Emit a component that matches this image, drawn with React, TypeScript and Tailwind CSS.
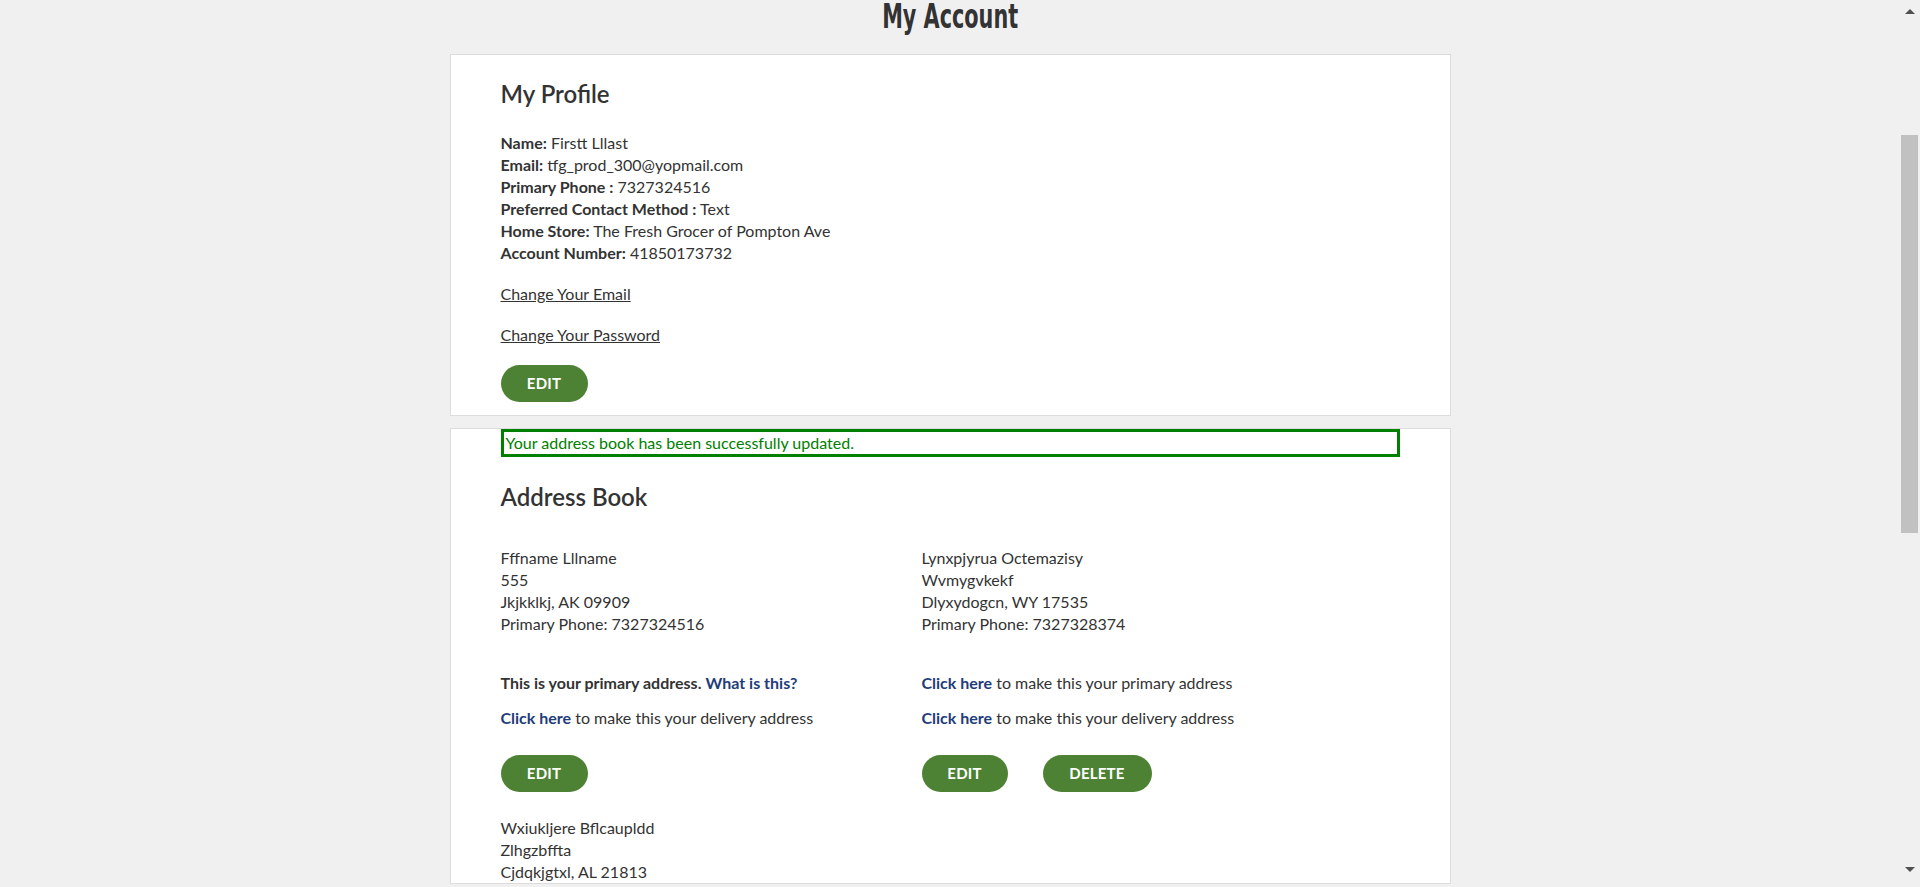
import React from "react";

const body = { fontFamily: "Lato, 'Open Sans', sans-serif" };
const title = {
  fontFamily: "'DejaVu Sans Condensed', 'DejaVu Sans', sans-serif",
};

function GreenButton({ label, w }: { label: string; w: string }) {
  return (
    <button
      className={`${w} h-[37px] rounded-full bg-[#4d8234] text-white text-[15px] font-bold uppercase tracking-[0.2px]`}
    >
      {label}
    </button>
  );
}

function ClickHere() {
  return <span className="font-bold text-[#1f3d79]">Click here</span>;
}

function Address({ lines }: { lines: string[] }) {
  return (
    <div className="leading-[22px]">
      {lines.map((l) => (
        <div key={l}>{l}</div>
      ))}
    </div>
  );
}

function Scrollbar() {
  return (
    <div className="w-[20px] h-full shrink-0 bg-[#f0f0f0] flex flex-col">
      <div className="w-[17px] ml-[1px] h-[17px] shrink-0 flex items-start justify-center pt-[9px]">
        <div className="w-0 h-0 border-l-[5px] border-r-[5px] border-b-[5px] border-l-transparent border-r-transparent border-b-[#505050]" />
      </div>
      <div className="h-[118px] shrink-0" />
      <div className="w-[17px] ml-[1px] h-[398px] shrink-0 bg-[#c1c1c1]" />
      <div className="flex-1" />
      <div className="w-[17px] ml-[1px] h-[17px] shrink-0 flex items-start justify-center pt-[3px] mb-[6px]">
        <div className="w-0 h-0 border-l-[5px] border-r-[5px] border-t-[5px] border-l-transparent border-r-transparent border-t-[#505050]" />
      </div>
    </div>
  );
}

export default function App() {
  return (
    <div className="w-full h-[887px] overflow-hidden bg-[#f0f0f0] flex text-[#333333]" style={body}>
      <div className="flex-1 flex flex-col items-center">
        {/* page title, scrolled partly out of view */}
        <h1
          className="shrink-0 h-[54px] text-[33px] font-bold leading-[33px] text-[#333333]"
          style={title}
        >
          <span className="inline-block scale-x-70">My Account</span>
        </h1>

        {/* My Profile */}
        <section className="shrink-0 w-[1001px] bg-white border border-[#dcdcdc] px-[50px] pt-[24px] pb-[13px]">
          <h2 className="text-[24px] font-semibold leading-[30px]">My Profile</h2>
          <div className="mt-[23px] text-[16px] leading-[22px]">
            <div><b>Name:</b> Firstt Lllast</div>
            <div><b>Email:</b> tfg_prod_300@yopmail.com</div>
            <div><b>Primary Phone :</b> 7327324516</div>
            <div><b>Preferred Contact Method :</b> Text</div>
            <div><b>Home Store:</b> The Fresh Grocer of Pompton Ave</div>
            <div><b>Account Number:</b> 41850173732</div>
          </div>
          <div className="mt-[19px] text-[16px] leading-[22px]">
            <a className="underline">Change Your Email</a>
          </div>
          <div className="mt-[19px] text-[16px] leading-[22px]">
            <a className="underline">Change Your Password</a>
          </div>
          <div className="mt-[19px]">
            <GreenButton label="Edit" w="w-[87px]" />
          </div>
        </section>

        {/* Address Book */}
        <section className="shrink-0 mt-[12px] w-[1001px] bg-white border border-[#dcdcdc] px-[50px] text-[16px]">
          <div className="border-[3px] border-[#008000] text-[#008000] leading-[22px] px-[2px]">
            Your address book has been successfully updated.
          </div>
          <h2 className="mt-[25px] text-[24px] font-semibold leading-[30px]">Address Book</h2>

          <div className="mt-[35px] grid grid-cols-[421px_1fr]">
            <div>
              <Address lines={["Fffname Lllname", "555", "Jkjkklkj, AK 09909", "Primary Phone: 7327324516"]} />
              <div className="mt-[37px] leading-[22px]">
                <b>This is your primary address.</b>{" "}
                <span className="font-bold text-[#1f3d79]">What is this?</span>
              </div>
              <div className="mt-[13px] leading-[22px]">
                <ClickHere /> to make this your delivery address
              </div>
              <div className="mt-[26px]">
                <GreenButton label="Edit" w="w-[87px]" />
              </div>
            </div>
            <div>
              <Address lines={["Lynxpjyrua Octemazisy", "Wvmygvkekf", "Dlyxydogcn, WY 17535", "Primary Phone: 7327328374"]} />
              <div className="mt-[37px] leading-[22px]">
                <ClickHere /> to make this your primary address
              </div>
              <div className="mt-[13px] leading-[22px]">
                <ClickHere /> to make this your delivery address
              </div>
              <div className="mt-[26px] flex gap-[35px]">
                <GreenButton label="Edit" w="w-[86px]" />
                <GreenButton label="Delete" w="w-[109px]" />
              </div>
            </div>
            <div className="mt-[25px]">
              <Address lines={["Wxiukljere Bflcaupldd", "Zlhgzbffta", "Cjdqkjgtxl, AL 21813"]} />
            </div>
          </div>
        </section>
      </div>
      <Scrollbar />
    </div>
  );
}
